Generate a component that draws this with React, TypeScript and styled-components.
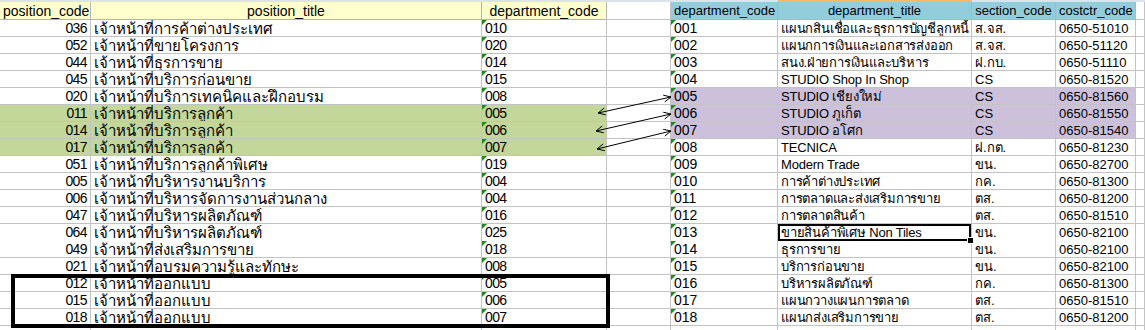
import styled, { createGlobalStyle } from "styled-components";

const GlobalStyle = createGlobalStyle`
  html, body {
    margin: 0;
    padding: 0;
    background: #ffffff;
  }
  body {
    font-family: "Liberation Sans", Arial, "Noto Sans", sans-serif;
  }
`;

const COLS = "91px 391px 125px 64px 107px 194px 84px 80px 9px";

const Sheet = styled.div`
  position: relative;
  width: 1145px;
  height: 330px;
  overflow: hidden;
  background: #fff;
`;

const Strip = styled.div`
  display: grid;
  grid-template-columns: ${COLS};
  height: 2px;
`;

const StripCell = styled.div<{ $active?: boolean }>`
  background: ${(p) => (p.$active ? "#f6b86a" : "#dde3ec")};
`;

const Row = styled.div<{ $h: number }>`
  display: grid;
  grid-template-columns: ${COLS};
  height: ${(p) => p.$h}px;
`;

const Cell = styled.div<{
  $bg?: string;
  $align?: "left" | "right" | "center";
  $size?: number;
  $track?: number;
  $tri?: boolean;
  $selected?: boolean;
}>`
  position: relative;
  box-sizing: border-box;
  border-right: 1px solid #c3c3c3;
  border-bottom: 1px solid #c3c3c3;
  background: ${(p) => p.$bg || "#fff"};
  text-align: ${(p) => p.$align || "left"};
  font-family: "Liberation Sans", Arial, "Noto Sans", sans-serif;
  font-size: ${(p) => p.$size || 13}px;
  letter-spacing: ${(p) => p.$track || 0}px;
  line-height: 17px;
  padding: 0 3px;
  white-space: nowrap;
  overflow: hidden;
  color: #000;

  &::before {
    content: "";
    display: ${(p) => (p.$tri ? "block" : "none")};
    position: absolute;
    left: 0;
    top: 0;
    border-top: 5px solid #1f8a1f;
    border-right: 5px solid transparent;
  }

  ${(p) =>
    p.$selected &&
    `
    box-shadow: inset 0 0 0 2px #000;
    overflow: visible;
  `}
`;

const FillHandle = styled.span`
  position: absolute;
  right: -3px;
  bottom: -3px;
  width: 5px;
  height: 5px;
  background: #000;
  border: 1px solid #fff;
  z-index: 2;
`;

const HeadCell = styled(Cell)`
  border-color: #b4b4b4;
  line-height: 18px;
`;

const Overlay = styled.svg`
  position: absolute;
  left: 0;
  top: 0;
  pointer-events: none;
`;

const MarkBox = styled.div`
  position: absolute;
  left: 11px;
  top: 274px;
  width: 599px;
  height: 54px;
  box-sizing: border-box;
  border: 4px solid #000;
  pointer-events: none;
`;

type LeftRow = [string, string, string];
type RightRow = [string, string, string, string];

const leftRows: LeftRow[] = [
  ["036", "เจ้าหน้าที่การค้าต่างประเทศ", "010"],
  ["052", "เจ้าหน้าที่ขายโครงการ", "020"],
  ["044", "เจ้าหน้าที่ธุรการขาย", "014"],
  ["045", "เจ้าหน้าที่บริการก่อนขาย", "015"],
  ["020", "เจ้าหน้าที่บริการเทคนิคและฝึกอบรม", "008"],
  ["011", "เจ้าหน้าที่บริการลูกค้า", "005"],
  ["014", "เจ้าหน้าที่บริการลูกค้า", "006"],
  ["017", "เจ้าหน้าที่บริการลูกค้า", "007"],
  ["051", "เจ้าหน้าที่บริการลูกค้าพิเศษ", "019"],
  ["005", "เจ้าหน้าที่บริหารงานบริการ", "004"],
  ["006", "เจ้าหน้าที่บริหารจัดการงานส่วนกลาง", "004"],
  ["047", "เจ้าหน้าที่บริหารผลิตภัณฑ์", "016"],
  ["064", "เจ้าหน้าที่บริหารผลิตภัณฑ์", "025"],
  ["049", "เจ้าหน้าที่ส่งเสริมการขาย", "018"],
  ["021", "เจ้าหน้าที่อบรมความรู้และทักษะ", "008"],
  ["012", "เจ้าหน้าที่ออกแบบ", "005"],
  ["015", "เจ้าหน้าที่ออกแบบ", "006"],
  ["018", "เจ้าหน้าที่ออกแบบ", "007"],
  ["", "", ""],
];

const rightRows: RightRow[] = [
  ["001", "แผนกสินเชื่อและธุรการบัญชีลูกหนี้", "ส.จส.", "0650-51010"],
  ["002", "แผนกการเงินและเอกสารส่งออก", "ส.จส.", "0650-51120"],
  ["003", "สนง.ฝ่ายการเงินและบริหาร", "ฝ.กบ.", "0650-51110"],
  ["004", "STUDIO Shop In Shop", "CS", "0650-81520"],
  ["005", "STUDIO เชียงใหม่", "CS", "0650-81560"],
  ["006", "STUDIO ภูเก็ต", "CS", "0650-81550"],
  ["007", "STUDIO อโศก", "CS", "0650-81540"],
  ["008", "TECNICA", "ฝ.กต.", "0650-81230"],
  ["009", "Modern Trade", "ขน.", "0650-82700"],
  ["010", "การค้าต่างประเทศ", "กค.", "0650-81300"],
  ["011", "การตลาดและส่งเสริมการขาย", "ตส.", "0650-81200"],
  ["012", "การตลาดสินค้า", "ตส.", "0650-81510"],
  ["013", "ขายสินค้าพิเศษ Non Tiles", "ขน.", "0650-82100"],
  ["014", "ธุรการขาย", "ขน.", "0650-82100"],
  ["015", "บริการก่อนขาย", "ขน.", "0650-82100"],
  ["016", "บริหารผลิตภัณฑ์", "กค.", "0650-81300"],
  ["017", "แผนกวางแผนการตลาด", "ตส.", "0650-81510"],
  ["018", "แผนกส่งเสริมการขาย", "ตส.", "0650-81200"],
  ["", "", "", ""],
];

const GREEN = "#c4d79b";
const PURPLE = "#ccc0da";
const YELLOW = "#ffffcc";
const BLUE = "#92cddc";

const arrows = [
  { x1: 598, y1: 113, x2: 671, y2: 97 },
  { x1: 596, y1: 131, x2: 671, y2: 114 },
  { x1: 597, y1: 149, x2: 671, y2: 131 },
];

function ArrowHead({ x, y, tx, ty }: { x: number; y: number; tx: number; ty: number }) {
  // open "V" head at (x,y), pointing away from (tx,ty)
  const dx = x - tx;
  const dy = y - ty;
  const len = Math.hypot(dx, dy);
  const ux = dx / len;
  const uy = dy / len;
  const size = 8;
  const spread = 0.45;
  const ax = x - size * (ux * Math.cos(spread) - uy * Math.sin(spread));
  const ay = y - size * (uy * Math.cos(spread) + ux * Math.sin(spread));
  const bx = x - size * (ux * Math.cos(-spread) - uy * Math.sin(-spread));
  const by = y - size * (uy * Math.cos(-spread) + ux * Math.sin(-spread));
  return <polyline points={`${ax},${ay} ${x},${y} ${bx},${by}`} fill="none" stroke="#000" strokeWidth={1} />;
}

export default function App() {
  return (
    <>
      <GlobalStyle />
      <Sheet>
        <Strip>
          {Array.from({ length: 9 }).map((_, i) => (
            <StripCell key={i} $active={i === 5} />
          ))}
        </Strip>
        <Row $h={18}>
          <HeadCell $bg={YELLOW} $align="center" $size={14}>position_code</HeadCell>
          <HeadCell $bg={YELLOW} $align="center" $size={14}>position_title</HeadCell>
          <HeadCell $bg={YELLOW} $align="center" $size={14}>department_code</HeadCell>
          <Cell />
          <HeadCell $bg={BLUE} $align="center">department_code</HeadCell>
          <HeadCell $bg={BLUE} $align="center">department_title</HeadCell>
          <HeadCell $bg={BLUE} $align="center">section_code</HeadCell>
          <HeadCell $bg={BLUE} $align="center">costctr_code</HeadCell>
          <Cell />
        </Row>
        {leftRows.map((l, i) => {
          const r = rightRows[i];
          const lbg = i >= 5 && i <= 7 ? GREEN : undefined;
          const rbg = i >= 4 && i <= 6 ? PURPLE : undefined;
          const filled = l[0] !== "";
          return (
            <Row $h={17} key={i}>
              <Cell $bg={lbg} $align="right" $size={14} $track={-0.6}>{l[0]}</Cell>
              <Cell $bg={lbg} $size={15}>{l[1]}</Cell>
              <Cell $bg={lbg} $size={14} $track={-0.6} $tri={filled}>{l[2]}</Cell>
              <Cell />
              <Cell $bg={rbg} $size={14} $tri={filled}>{r[0]}</Cell>
              <Cell $bg={rbg} $track={-0.2} $selected={i === 12}>
                {r[1]}
                {i === 12 && <FillHandle />}
              </Cell>
              <Cell $bg={rbg}>{r[2]}</Cell>
              <Cell $bg={rbg}>{r[3]}</Cell>
              <Cell />
            </Row>
          );
        })}
        <Overlay width={1145} height={330}>
          {arrows.map((a, i) => (
            <g key={i}>
              <line x1={a.x1} y1={a.y1} x2={a.x2} y2={a.y2} stroke="#000" strokeWidth={1} />
              <ArrowHead x={a.x1} y={a.y1} tx={a.x2} ty={a.y2} />
              <ArrowHead x={a.x2} y={a.y2} tx={a.x1} ty={a.y1} />
            </g>
          ))}
        </Overlay>
        <MarkBox />
      </Sheet>
    </>
  );
}
